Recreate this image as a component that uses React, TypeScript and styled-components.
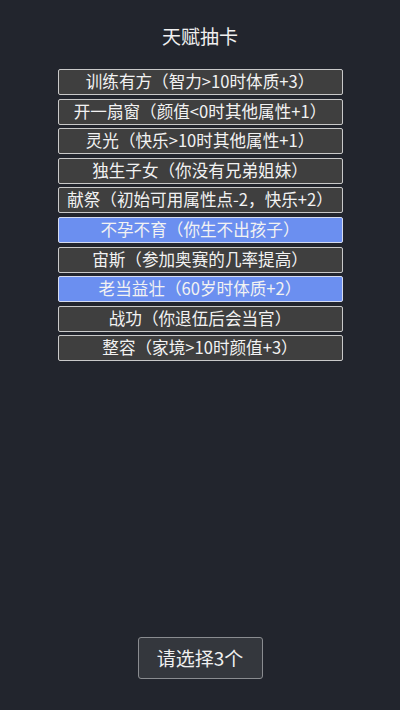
import React from "react";
import styled, { createGlobalStyle } from "styled-components";

const Global = createGlobalStyle`
  html, body { margin: 0; padding: 0; background: #22252d; }
  body { font-family: "Noto Sans CJK SC", "Noto Sans", sans-serif; }
`;

const Page = styled.div`
  width: 400px;
  height: 710px;
  background: #22252d;
  display: flex;
  flex-direction: column;
  align-items: center;
  box-sizing: border-box;
  padding-top: 24px;
  color: #ececec;
`;

const Title = styled.div`
  font-size: 19px;
  line-height: 24px;
  height: 24px;
  color: #f0f0f0;
`;

const List = styled.div`
  margin-top: 21px;
  width: 285px;
  display: flex;
  flex-direction: column;
  gap: 3.6px;
`;

const Item = styled.div<{ $selected?: boolean }>`
  height: 26px;
  box-sizing: border-box;
  border: 1.5px solid ${(p) => (p.$selected ? "#d6dcef" : "#c9c9c9")};
  border-radius: 2px;
  background: ${(p) => (p.$selected ? "#6b8ff0" : "#3f3f3f")};
  color: #f2f2f2;
  font-size: 16.6px;
  line-height: 23px;
  text-align: center;
  white-space: nowrap;
`;

const Spacer = styled.div`
  flex: 1;
`;

const Button = styled.div`
  width: 125px;
  height: 42px;
  box-sizing: border-box;
  border: 1.5px solid #8a8c90;
  border-radius: 3px;
  background: #34373d;
  color: #f0f0f0;
  font-size: 19px;
  line-height: 39px;
  text-align: center;
  margin-bottom: 31px;
`;

const items: { text: string; selected?: boolean }[] = [
  { text: "训练有方（智力>10时体质+3）" },
  { text: "开一扇窗（颜值<0时其他属性+1）" },
  { text: "灵光（快乐>10时其他属性+1）" },
  { text: "独生子女（你没有兄弟姐妹）" },
  { text: "献祭（初始可用属性点-2，快乐+2）" },
  { text: "不孕不育（你生不出孩子）", selected: true },
  { text: "宙斯（参加奥赛的几率提高）" },
  { text: "老当益壮（60岁时体质+2）", selected: true },
  { text: "战功（你退伍后会当官）" },
  { text: "整容（家境>10时颜值+3）" },
];

export default function App() {
  return (
    <>
      <Global />
      <Page>
        <Title>天赋抽卡</Title>
        <List>
          {items.map((it) => (
            <Item key={it.text} $selected={it.selected}>
              {it.text}
            </Item>
          ))}
        </List>
        <Spacer />
        <Button>请选择3个</Button>
      </Page>
    </>
  );
}
